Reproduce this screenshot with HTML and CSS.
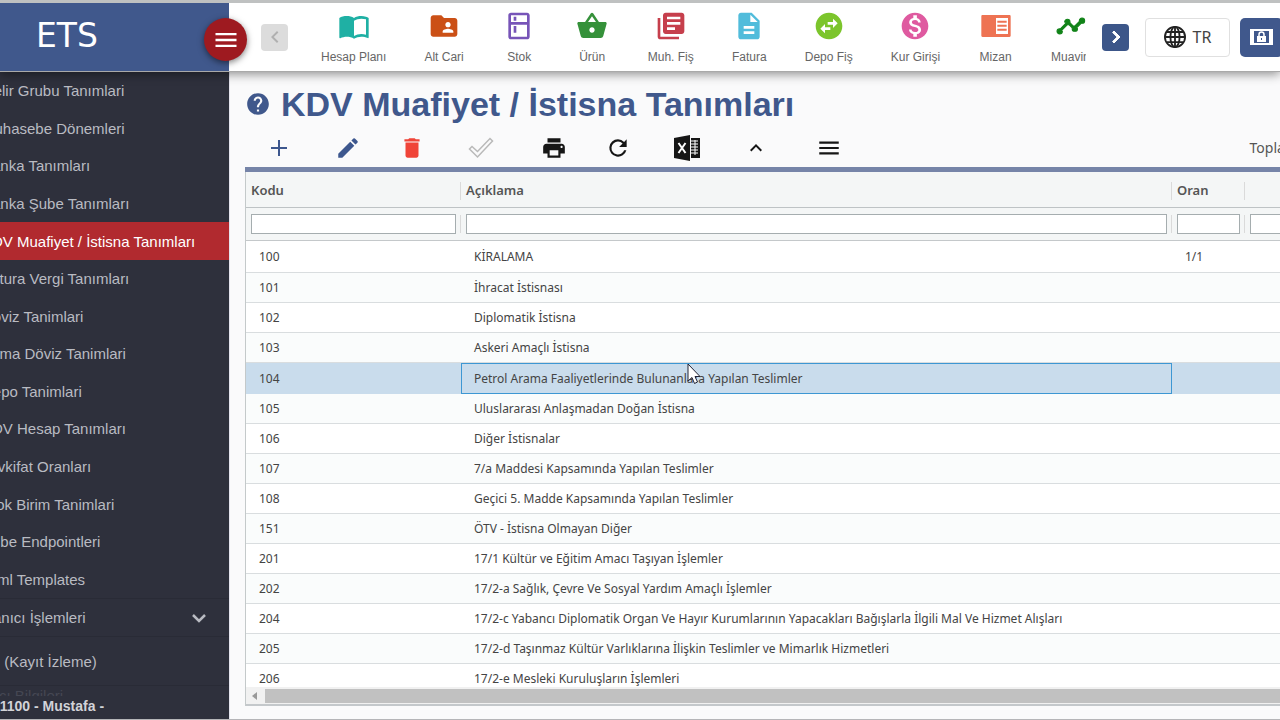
FILE: index.html
```html
<!DOCTYPE html>
<html lang="tr">
<head>
<meta charset="utf-8">
<title>ETS - KDV Muafiyet / İstisna Tanımları</title>
<link rel="stylesheet" href="styles.css">
</head>
<body>
<div class="app">
  <header class="topbar">
    <div class="brand">ETS
      <button class="menu-toggle" aria-label="Menü"><svg viewBox="0 0 24 24" width="28" height="28"><path d="M3 18h18v-2H3zm0-5h18v-2H3zm0-7v2h18V6z"/></svg></button>
    </div>
    <button class="arrow arrow-off" aria-label="Geri" disabled><svg viewBox="0 0 24 24" width="24" height="24"><path d="M15.4 7.4 14 6l-6 6 6 6 1.4-1.4L10.800 12z"/></svg></button>
    <nav class="shortcuts">
      <a href="#" class="shortcut teal"><svg viewBox="0 0 24 24"><path d="M21 5c-1.110-.35-2.330-.5-3.500-.5-1.950 0-4.050.4-5.500 1.500-1.450-1.100-3.550-1.500-5.500-1.500S2.450 4.900 1 6v14.650c0 .25.25.5.5.5.1 0 .15-.05.25-.05C3.100 20.450 5.050 20 6.500 20c1.950 0 4.050.4 5.500 1.500 1.350-.85 3.800-1.500 5.500-1.500 1.650 0 3.350.3 4.750 1.050.1.050.15.050.25.050.25 0 .5-.25.5-.5V6c-.6-.45-1.250-.75-2-1zm0 13.500c-1.100-.35-2.300-.5-3.500-.5-1.700 0-4.150.65-5.500 1.500V8c1.350-.85 3.800-1.500 5.500-1.500 1.200 0 2.400.15 3.500.5z"/></svg><span>Hesap Planı</span></a>
      <a href="#" class="shortcut orange"><svg viewBox="0 0 24 24"><path d="M20 6h-8l-2-2H4c-1.100 0-1.990.9-1.990 2L2 18c0 1.100.9 2 2 2h16c1.100 0 2-.9 2-2V8c0-1.100-.9-2-2-2zm-5 3c1.100 0 2 .9 2 2s-.9 2-2 2-2-.9-2-2 .9-2 2-2zm4 8h-8v-1c0-1.330 2.670-2 4-2s4 .67 4 2z"/></svg><span>Alt Cari</span></a>
      <a href="#" class="shortcut purple"><svg viewBox="0 0 24 24"><path d="M18 2H6c-1.100 0-2 .9-2 2v16c0 1.100.9 2 2 2h12c1.100 0 2-.9 2-2V4c0-1.100-.9-2-2-2zm0 18H6v-9h12zm0-11H6V4h12zM8 5h2v3H8zm0 7h2v5H8z"/></svg><span>Stok</span></a>
      <a href="#" class="shortcut green"><svg viewBox="0 0 24 24"><path d="m17.210 9-4.380-6.560c-.19-.28-.51-.42-.83-.42s-.64.14-.83.430L6.790 9H2c-.55 0-1 .45-1 1 0 .09.010.18.040.270l2.540 9.270c.230.840 1 1.460 1.920 1.460h13c.920 0 1.690-.62 1.930-1.460l2.540-9.270L23 10c0-.55-.45-1-1-1zM9 9l3-4.400L15 9zm3 8c-1.100 0-2-.9-2-2s.9-2 2-2 2 .9 2 2-.9 2-2 2z"/></svg><span>Ürün</span></a>
      <a href="#" class="shortcut red"><svg viewBox="0 0 24 24"><path d="M4 6H2v14c0 1.100.9 2 2 2h14v-2H4zm16-4H8c-1.100 0-2 .9-2 2v12c0 1.100.9 2 2 2h12c1.100 0 2-.9 2-2V4c0-1.100-.9-2-2-2zm-1 9H9V9h10zm-4 4H9v-2h6zm4-8H9V5h10z"/></svg><span>Muh. Fiş</span></a>
      <a href="#" class="shortcut sky"><svg viewBox="0 0 24 24"><path d="M14 2H6c-1.100 0-1.990.9-1.990 2L4 20c0 1.100.89 2 1.990 2H18c1.100 0 2-.9 2-2V8zm2 16H8v-2h8zm0-4H8v-2h8zm-3-5V3.500L18.500 9z"/></svg><span>Fatura</span></a>
      <a href="#" class="shortcut lime"><svg viewBox="0 0 24 24"><path d="M22 12c0-5.520-4.480-10-10-10S2 6.480 2 12s4.480 10 10 10 10-4.480 10-10zm-7-5.500 3.500 3.500-3.500 3.500V11h-4V9h4zm-6 11L5.500 14 9 10.500V13h4v2H9z"/></svg><span>Depo Fiş</span></a>
      <a href="#" class="shortcut pink"><svg viewBox="0 0 24 24"><path d="M12 2C6.480 2 2 6.480 2 12s4.480 10 10 10 10-4.480 10-10S17.520 2 12 2zm1.410 16.090V20h-2.670v-1.930c-1.710-.36-3.160-1.460-3.270-3.400h1.960c.1 1.050.82 1.870 2.650 1.870 1.960 0 2.400-.98 2.400-1.590 0-.83-.44-1.610-2.670-2.140-2.480-.6-4.180-1.620-4.180-3.670 0-1.720 1.390-2.840 3.110-3.210V4h2.670v1.950c1.860.45 2.790 1.860 2.850 3.390H14.300c-.05-1.110-.64-1.870-2.220-1.870-1.500 0-2.400.68-2.400 1.640 0 .84.65 1.390 2.670 1.910s4.180 1.390 4.180 3.910c-.01 1.830-1.380 2.830-3.120 3.160z"/></svg><span>Kur Girişi</span></a>
      <a href="#" class="shortcut coral"><svg viewBox="0 0 24 24"><path d="M22.130 3.840H1.870C1.400 3.840 1 4.240 1 4.700v14.600c0 .47.4.87.87.87h20.260c.47 0 .87-.4.87-.87V4.700c0-.46-.4-.86-.87-.86zM21 18h-9V6h9z"/><path d="M13 8h7v1.500h-7zm0 3h7v1.500h-7zm0 3h7v1.500h-7z"/></svg><span>Mizan</span></a>
      <a href="#" class="shortcut forest"><svg viewBox="0 0 24 24"><path d="M23 8c0 1.100-.9 2-2 2-.18 0-.35-.02-.51-.07l-3.560 3.550c.5.160.7.340.7.520 0 1.100-.9 2-2 2s-2-.9-2-2c0-.18.020-.36.070-.52l-2.550-2.550c-.16.050-.34.070-.52.070s-.36-.02-.52-.07l-4.550 4.560c.5.160.7.330.7.510 0 1.100-.9 2-2 2s-2-.9-2-2 .9-2 2-2c.18 0 .35.020.51.070l4.560-4.550C8.020 9.360 8 9.180 8 9c0-1.100.9-2 2-2s2 .9 2 2c0 .18-.02.36-.07.52l2.550 2.550c.16-.05.34-.07.52-.07s.36.020.52.070l3.550-3.560C19.020 8.350 19 8.180 19 8c0-1.100.9-2 2-2s2 .9 2 2z" stroke="currentColor" stroke-width=".8"/></svg><span>Muavin</span></a>
    </nav>
    <button class="arrow arrow-on" aria-label="İleri"><svg viewBox="0 0 24 24" width="24" height="24"><path d="M10 6 8.590 7.410 13.170 12l-4.580 4.590L10 18l6-6z" stroke="currentColor"/></svg></button>
    <button class="lang"><svg viewBox="0 0 24 24" width="22" height="22" class="stroke"><circle cx="12" cy="12" r="11"/><ellipse cx="12" cy="12" rx="5" ry="11"/><path d="M12 1v22M1 12h22M3 6.500h18M3 17.500h18"/></svg>TR</button>
    <button class="lock" aria-label="Kilit"><svg viewBox="0 0 25 16" width="25" height="16"><path fill="#fff" d="M1 0h23v16H1z"/><path fill="#40588c" d="M5 2h15v12H5z"/><path fill="#fff" d="M8 7h9v6H8z"/><path d="M10 8V5.500a2.500 2.500 0 0 1 5 0V8" fill="none" stroke="#fff" stroke-width="1.500"/><path fill="#40588c" d="M12 9h1v2h-1z"/></svg></button>
  </header>

  <aside class="sidebar">
    <ul class="submenu">
      <li><a href="#">Gelir Grubu Tanımlari</a></li>
      <li><a href="#">Muhasebe Dönemleri</a></li>
      <li><a href="#">Banka Tanımları</a></li>
      <li><a href="#">Banka Şube Tanımları</a></li>
      <li class="active"><a href="#">KDV Muafiyet / İstisna Tanımları</a></li>
      <li><a href="#">Fatura Vergi Tanımları</a></li>
      <li><a href="#">Döviz Tanimlari</a></li>
      <li><a href="#">Firma Döviz Tanimlari</a></li>
      <li><a href="#">Depo Tanimlari</a></li>
      <li><a href="#">KDV Hesap Tanımları</a></li>
      <li><a href="#">Tevkifat Oranları</a></li>
      <li><a href="#">Stok Birim Tanimlari</a></li>
      <li><a href="#">Şube Endpointleri</a></li>
      <li><a href="#">Html Templates</a></li>
    </ul>
    <a href="#" class="group group-users">Kullanıcı İşlemleri<svg viewBox="0 0 16 16" width="16" height="16"><path d="m2 5 6 6 6-6" fill="none" stroke="currentColor" stroke-width="2.500"/></svg></a>
    <a href="#" class="group group-log">Log (Kayıt İzleme)</a>
    <div class="account"><span class="faded">Yazıcı Bilgileri</span><span class="user">21100 - Mustafa -</span></div>
  </aside>

  <main class="content">
    <h1><svg viewBox="0 0 24 24" width="26" height="26"><path d="M12 2C6.480 2 2 6.480 2 12s4.480 10 10 10 10-4.480 10-10S17.520 2 12 2zm1 17h-2v-2h2zm2.070-7.750-.9.920C13.450 12.900 13 13.500 13 15h-2v-.5c0-1.100.45-2.100 1.170-2.830l1.240-1.260c.37-.36.590-.86.590-1.410 0-1.100-.9-2-2-2s-2 .9-2 2H8c0-2.210 1.790-4 4-4s4 1.790 4 4c0 .88-.36 1.680-.93 2.250z"/></svg>KDV Muafiyet / İstisna Tanımları</h1>
    <div class="toolbar">
      <button class="tool blue" aria-label="Ekle"><svg viewBox="0 0 24 24" width="24" height="24"><path d="M11 4h2v7h7v2h-7v7h-2v-7H4v-2h7z"/></svg></button>
      <button class="tool blue near" aria-label="Düzenle"><svg viewBox="0 0 24 24" width="26" height="26"><path d="M3 17.250V21h3.750L17.810 9.940l-3.750-3.750zM20.710 7.040a1 1 0 0 0 0-1.410l-2.340-2.340a1 1 0 0 0-1.410 0l-1.830 1.830 3.750 3.750z"/></svg></button>
      <button class="tool danger" aria-label="Sil"><svg viewBox="0 0 24 24" width="26" height="26"><path d="M6 19c0 1.100.9 2 2 2h8c1.100 0 2-.9 2-2V7H6zM19 4h-3.500l-1-1h-5l-1 1H5v2h14z"/></svg></button>
      <button class="tool muted far" aria-label="Onayla"><svg viewBox="0 0 26 24" width="26" height="24"><path d="m1.500 13 2.500-2.500 5.500 5L22 2.500 24.500 5 9.500 21z" fill="none" stroke="currentColor" stroke-width="1.500"/></svg></button>
      <button class="tool near" aria-label="Yazdır"><svg viewBox="0 0 24 24" width="26" height="26"><path d="M19 8H5c-1.660 0-3 1.340-3 3v6h4v4h12v-4h4v-6c0-1.660-1.340-3-3-3zm-3 11H8v-5h8zm3-7c-.55 0-1-.45-1-1s.45-1 1-1 1 .45 1 1-.45 1-1 1zm-1-9H6v4h12z"/></svg></button>
      <button class="tool" aria-label="Yenile"><svg viewBox="0 0 24 24" width="26" height="26"><path d="M17.650 6.350A7.960 7.960 0 0 0 12 4a8 8 0 1 0 7.730 10h-2.080A6 6 0 1 1 12 6c1.660 0 3.140.69 4.220 1.780L13 11h7V4z"/></svg></button>
      <button class="tool" aria-label="Excel"><svg viewBox="0 0 26 26" width="26" height="26"><path d="M0 3 16 0v26L0 23zM17 3h9v20h-9z"/><path d="m4.500 8 7 10m0-10-7 10" stroke="#fff" stroke-width="2"/><path d="M17 6h7M17 9h7M17 12h7M17 15h7M17 18h7M21 5v15" stroke="#fff" stroke-width="1"/></svg></button>
      <button class="tool far" aria-label="Gizle"><svg viewBox="0 0 24 24" width="24" height="24"><path d="m12 8-6 6 1.410 1.410L12 10.830l4.590 4.580L18 14z"/></svg></button>
      <button class="tool" aria-label="Seçenekler"><svg viewBox="0 0 24 24" width="26" height="26"><path d="M3 18h18v-2H3zm0-5h18v-2H3zm0-7v2h18V6z"/></svg></button>
      <span class="total">Toplam</span>
    </div>
    <section class="grid">
      <div class="grid-body">
        <table>
          <colgroup><col class="c-code"><col class="c-desc"><col class="c-rate"><col></colgroup>
          <thead>
            <tr class="heads"><th scope="col">Kodu</th><th scope="col">Açıklama</th><th scope="col">Oran</th><th></th></tr>
            <tr class="filters"><td><input type="text" aria-label="Kodu"></td><td><input type="text" aria-label="Açıklama"></td><td><input type="text" aria-label="Oran"></td><td><input type="text" aria-label="Filtre"></td></tr>
          </thead>
          <tbody>
            <tr><td>100</td><td>KİRALAMA</td><td>1/1</td><td></td></tr>
            <tr><td>101</td><td>İhracat İstisnası</td><td></td><td></td></tr>
            <tr><td>102</td><td>Diplomatik İstisna</td><td></td><td></td></tr>
            <tr><td>103</td><td>Askeri Amaçlı İstisna</td><td></td><td></td></tr>
            <tr class="selected"><td>104</td><td class="focused">Petrol Arama Faaliyetlerinde Bulunanlara Yapılan Teslimler<svg class="pointer" viewBox="0 0 14 22" width="14" height="22"><path d="M1 1v17l4-3.500 2.500 6 3-1.500L8 13.500h5z" fill="#fff" stroke="#223" stroke-width="1"/></svg></td><td></td><td></td></tr>
            <tr><td>105</td><td>Uluslararası Anlaşmadan Doğan İstisna</td><td></td><td></td></tr>
            <tr><td>106</td><td>Diğer İstisnalar</td><td></td><td></td></tr>
            <tr><td>107</td><td>7/a Maddesi Kapsamında Yapılan Teslimler</td><td></td><td></td></tr>
            <tr><td>108</td><td>Geçici 5. Madde Kapsamında Yapılan Teslimler</td><td></td><td></td></tr>
            <tr><td>151</td><td>ÖTV - İstisna Olmayan Diğer</td><td></td><td></td></tr>
            <tr><td>201</td><td>17/1 Kültür ve Eğitim Amacı Taşıyan İşlemler</td><td></td><td></td></tr>
            <tr><td>202</td><td>17/2-a Sağlık, Çevre Ve Sosyal Yardım Amaçlı İşlemler</td><td></td><td></td></tr>
            <tr><td>204</td><td>17/2-c Yabancı Diplomatik Organ Ve Hayır Kurumlarının Yapacakları Bağışlarla İlgili Mal Ve Hizmet Alışları</td><td></td><td></td></tr>
            <tr><td>205</td><td>17/2-d Taşınmaz Kültür Varlıklarına İlişkin Teslimler ve Mimarlık Hizmetleri</td><td></td><td></td></tr>
            <tr><td>206</td><td>17/2-e Mesleki Kuruluşların İşlemleri</td><td></td><td></td></tr>
          </tbody>
        </table>
      </div>
      <div class="scrollbar"><svg viewBox="0 0 6 8" width="6" height="8"><path d="M5 0v8L0 4z" fill="#999"/></svg><span class="thumb"></span></div>
    </section>
  </main>
</div>
</body>
</html>
```
FILE: styles.css
```css
* { box-sizing: border-box; }

body {
  margin: 0;
  font-family: "Liberation Sans", Arial, sans-serif;
  background: #fafafb;
  color: #444;
}

button {
  border: 0;
  padding: 0;
  background: none;
  font: inherit;
  color: inherit;
  cursor: pointer;
}

a { color: inherit; text-decoration: none; }
svg { fill: currentColor; flex: none; }

.app {
  display: grid;
  grid-template: auto minmax(0, 1fr) / 229px minmax(0, 1fr);
  height: 100vh;
  overflow: hidden;
  border-top: 3px solid #bfc1c1;
  border-bottom: 1px solid #b5b5b8;
}

/* Top bar */
.topbar {
  grid-column: 1 / -1;
  z-index: 2;
  display: flex;
  align-items: center;
  height: 69px;
  background: #fff;
  border-bottom: 1px solid #a9a9a9;
  box-shadow: 0 2px 10px rgba(0, 0, 0, .45);
}

.brand {
  position: relative;
  flex: none;
  width: 229px;
  height: 68px;
  padding-left: 36px;
  background: #40588c;
  color: #fff;
  font: 33px/66px "DejaVu Sans", sans-serif;
}

.menu-toggle {
  position: absolute;
  right: -18px;
  top: 15px;
  display: grid;
  place-items: center;
  width: 43px;
  height: 43px;
  border-radius: 50%;
  background: #9e1a20;
  box-shadow: 0 2px 6px rgba(0, 0, 0, .5);
}

.arrow {
  flex: none;
  display: grid;
  place-items: center;
  width: 27px;
  height: 27px;
  border-radius: 4px;
}
.arrow-off { margin-left: 32px; background: #dcdcdc; color: #b0b0b0; }
.arrow-on { background: #3c5689; color: #fff; }

.shortcuts {
  flex: 1;
  display: flex;
  min-width: 0;
  margin: 0 16px 0 14px;
  overflow: hidden;
}
.shortcut {
  flex: none;
  display: flex;
  flex-direction: column;
  align-items: center;
  gap: 7px;
  min-width: 73px;
  padding: 0 19px;
  font-size: 12px;
  line-height: 16px;
}
.shortcut span { color: #666; }
.shortcut svg { width: 32px; height: 32px; }
.teal { color: #1fb0a4; }
.orange { color: #cb5016; }
.purple { color: #7754b8; }
.green { color: #35913a; }
.red { color: #c63f4c; }
.sky { color: #51bcdb; }
.lime { color: #7cc52c; }
.pink { color: #df5aa0; }
.coral { color: #ee7353; }
.forest { color: #118318; }

.lang {
  flex: none;
  display: flex;
  align-items: center;
  justify-content: center;
  gap: 7px;
  width: 85px;
  height: 39px;
  margin-left: 16px;
  border: 1px solid #e0e0e0;
  border-radius: 4px;
  font: 16px "Noto Sans", sans-serif;
}
.stroke { fill: none; stroke: #222; stroke-width: 2; }
.lock {
  flex: none;
  display: grid;
  place-items: center;
  width: 43px;
  height: 39px;
  margin: 0 -3px 0 10px;
  border-radius: 5px;
  background: #40588c;
}

/* Sidebar */
.sidebar {
  display: flex;
  flex-direction: column;
  overflow: hidden;
  background: #2e303c;
  color: #b9bbc2;
  font-size: 15px;
  white-space: nowrap;
}
.submenu {
  flex: 1;
  display: flex;
  flex-direction: column;
  margin: 0;
  padding: 0;
  list-style: none;
}
.submenu li {
  flex: 1;
  display: flex;
  align-items: center;
  text-indent: -18px;
}
.submenu .active { background: #b12a2f; color: #fff; }
.group {
  display: flex;
  align-items: center;
  justify-content: space-between;
  padding-right: 22px;
  border-top: 1px solid #292b36;
}
.group-users { height: 38px; text-indent: -32px; }
.group-log { height: 49px; text-indent: -25px; }
.account {
  display: grid;
  height: 34px;
  border-top: 1px solid #292b36;
}
.account span { grid-area: 1 / 1; }
.faded { align-self: start; color: #454753; text-indent: -30px; line-height: 20px; }
.user {
  align-self: end;
  line-height: 20px;
  margin-bottom: 3px;
  background: #2e303c;
  color: #d2d3d8;
  font-size: 14px;
  font-weight: bold;
  text-indent: -8px;
}

/* Page */
.content {
  display: flex;
  flex-direction: column;
  min-width: 0;
  padding: 10px 0 13px 15px;
  border-left: 1px solid #e4e4ee;
}
h1 {
  display: flex;
  align-items: center;
  gap: 10px;
  margin: 0;
  color: #40588c;
  font-size: 34px;
  line-height: 44px;
  white-space: nowrap;
}
.toolbar {
  display: flex;
  align-items: center;
  gap: 41px;
  height: 46px;
  padding: 2px 0 0 20px;
  border-bottom: 5px solid #7684a8;
  color: #161616;
}
.tool {
  flex: none;
  display: grid;
  place-items: center;
  width: 28px;
  height: 28px;
}
.near { margin-right: -5px; }
.far { margin-right: 4px; }
.blue { color: #3d578e; }
.danger { color: #f04438; }
.muted { color: #b9b9b9; }
.total {
  flex: none;
  margin: 0 -18px 0 auto;
  color: #555;
  font: 14px "Noto Sans", sans-serif;
}

/* Data grid */
.grid {
  flex: 1;
  display: flex;
  flex-direction: column;
  min-height: 0;
  border-left: 1px solid #c4c9ca;
  border-bottom: 2px solid #c4c8cb;
  font: 12px "Noto Sans", sans-serif;
}
.grid-body { flex: 1; min-height: 0; overflow: hidden; }
table {
  width: 1100px;
  table-layout: fixed;
  border-collapse: separate;
  border-spacing: 0;
}
.c-code { width: 215px; }
.c-desc { width: 711px; }
.c-rate { width: 73px; }
.heads th {
  height: 36px;
  padding: 0 5px;
  background: linear-gradient(#dadada, #dadada) 100% 60% / 1px 18px no-repeat, #f4f6f6;
  border-bottom: 1px solid #bec3c5;
  color: #555;
  font-size: 13px;
  font-weight: 600;
  text-align: left;
}
.filters td {
  height: 33px;
  padding: 0 5px;
  background: linear-gradient(#dadada, #dadada) 100% 50% / 1px 18px no-repeat, #f4f6f6;
  border-bottom: 1px solid #c4c8ca;
}
.filters input {
  display: block;
  width: 100%;
  height: 20px;
  border: 1px solid #a5adaf;
  background: #fff;
}
tbody td {
  height: 30px;
  padding: 0 13px;
  background: #fff;
  border-bottom: 1px solid #d9dddf;
  white-space: nowrap;
}
tbody tr:first-child td { height: 32px; }
tbody tr:nth-child(even) td { background: #fafcfc; }
tbody .selected td { height: 31px; background: #c9dcec; border-bottom-color: #c9dcec; }
tbody .selected .focused {
  position: relative;
  padding-left: 12px;
  border: 1px solid #3d97d3;
}
.pointer { position: absolute; left: 225px; top: -1px; }
.scrollbar {
  display: flex;
  align-items: center;
  gap: 7px;
  height: 17px;
  padding-left: 6px;
  background: #f1f1f1;
}
.thumb { flex: 1; height: 14px; background: #c1c1c1; }
```
